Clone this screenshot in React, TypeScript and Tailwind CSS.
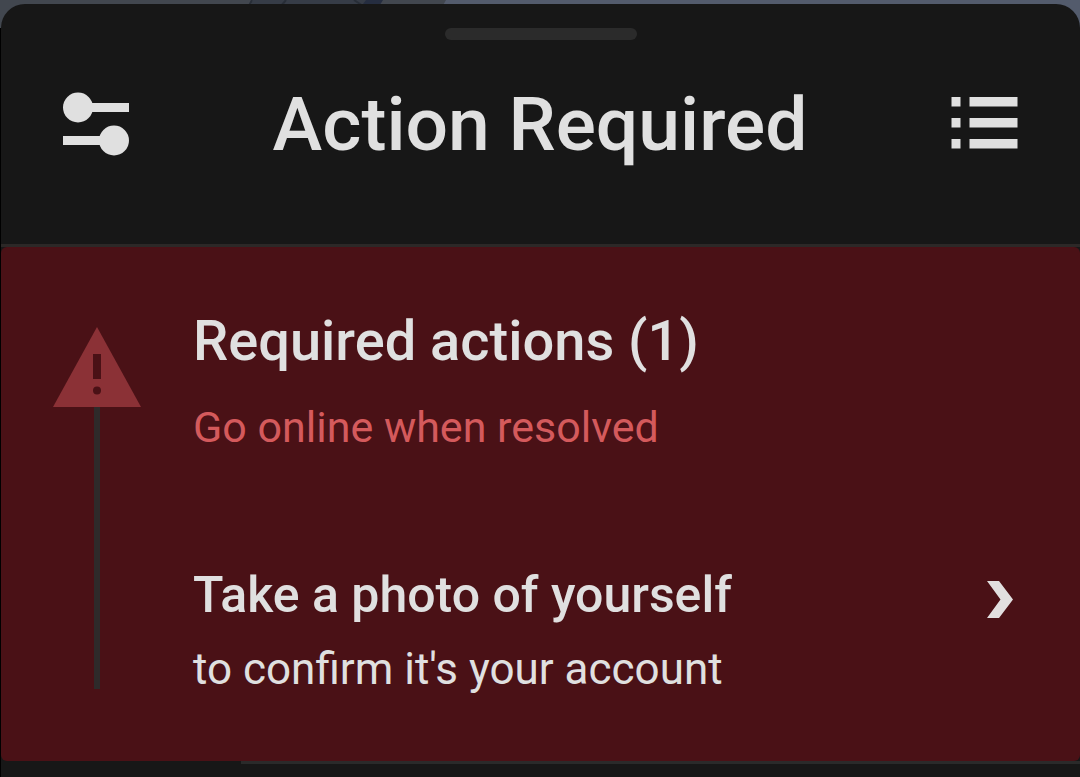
const requiredActions = [
  {
    title: 'Take a photo of yourself',
    detail: "to confirm it's your account",
  },
];

function PreferencesIcon() {
  return (
    <svg viewBox="0 0 66 64" className="w-[66px] h-16" fill="currentColor" aria-hidden="true">
      <circle cx="15" cy="15.5" r="15" />
      <rect x="15" y="11" width="51" height="9" />
      <rect x="0" y="44" width="51" height="9" />
      <circle cx="51" cy="48.5" r="15" />
    </svg>
  );
}

function ListIcon() {
  return (
    <svg viewBox="0 0 67 54" className="w-[67px] h-[54px]" fill="currentColor" aria-hidden="true">
      {[0, 21, 42].map((y) => (
        <g key={y}>
          <rect x="0.5" y={y} width="9" height="9.5" />
          <rect x="18.5" y={y} width="48" height="9.5" />
        </g>
      ))}
    </svg>
  );
}

function WarningIcon() {
  return (
    <svg viewBox="0 0 88 80" className="w-[88px] h-20 shrink-0" aria-hidden="true">
      <path d="M44 0L88 80H0z" fill="#8b3136" />
      <rect x="40" y="27" width="8" height="25" fill="#4a1116" />
      <circle cx="44" cy="63.5" r="4" fill="#4a1116" />
    </svg>
  );
}

function ChevronIcon() {
  return (
    <svg viewBox="0 0 26 37" className="w-[26px] h-[37px] shrink-0" fill="#e2dfdf" aria-hidden="true">
      <path d="M0 0H12L26 18.5L12 37H0L13.5 18.5z" />
    </svg>
  );
}

/* Map showing above the sheet */
function MapStrip() {
  return (
    <svg
      viewBox="0 0 1080 28"
      preserveAspectRatio="xMinYMin slice"
      className="absolute inset-x-0 top-0 w-full h-7"
      aria-hidden="true"
    >
      <rect width="1080" height="28" fill="#535b6c" />
      <path d="M0 0H446L430 28H0z" fill="#42474f" />
      <path d="M253 0H370L360 8H250z" fill="#363c47" />
      <path d="M252 0L249 6M286 0L281 6M354 0L363 6" stroke="#282e38" strokeWidth="2" />
      <path d="M366 0H383L378 8H360z" fill="#252d40" />
    </svg>
  );
}

export default function App() {
  return (
    <div className="relative min-h-screen flex flex-col bg-black pl-px pt-1 font-['Roboto','Noto_Sans',sans-serif] text-[#e0e0e0]">
      <MapStrip />

      <main className="relative flex-1 flex flex-col bg-[#171717] rounded-t-3xl">
        {/* Header */}
        <header className="flex flex-col border-b-[3px] border-[#2c2827] pt-6">
          <div className="w-48 h-3 rounded-full bg-[#2b2b2b] self-center" />
          <div className="flex items-center justify-between px-[62px] pt-10 pb-[76px]">
            <button type="button" aria-label="Preferences">
              <PreferencesIcon />
            </button>
            <h1 className="text-[75px] leading-[88px] font-medium whitespace-nowrap">Action Required</h1>
            <button type="button" aria-label="List">
              <ListIcon />
            </button>
          </div>
        </header>

        {/* Required actions */}
        <section className="flex gap-[52px] bg-[#4a1116] rounded-md pl-[52px] pr-[67px] pt-16 pb-16">
          <div className="flex flex-col items-center pt-4 pb-2">
            <WarningIcon />
            <div className="w-1.5 flex-1 bg-[#2e2a2a]" />
          </div>

          <div className="flex-1">
            <h2 className="text-[56px] leading-[60px] font-medium">
              Required actions ({requiredActions.length})
            </h2>
            <p className="text-[43px] leading-[56px] mt-7 text-[#d45a5c]">Go online when resolved</p>

            {requiredActions.map((action) => (
              <button
                key={action.title}
                type="button"
                className="w-full flex items-start justify-between mt-[110px] text-left"
              >
                <span>
                  <span className="block text-[50px] leading-[60px] font-medium">{action.title}</span>
                  <span className="block text-[44px] leading-[56px] mt-4">{action.detail}</span>
                </span>
                <span className="pt-4">
                  <ChevronIcon />
                </span>
              </button>
            ))}
          </div>
        </section>

        <div className="ml-60 h-[3px] bg-[#2a2a2a]" />
      </main>
    </div>
  );
}
